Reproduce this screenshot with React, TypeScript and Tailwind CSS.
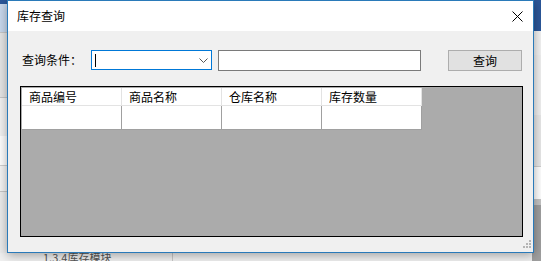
const columns = ['商品编号', '商品名称', '仓库名称', '库存数量'];

export default function App() {
  return (
    <div className="relative w-[541px] h-[261px] overflow-hidden bg-[#f0f0f0] font-['Noto_Sans_CJK_SC','Microsoft_YaHei',sans-serif] text-[12px] text-black">
      {/* Background window, left edge */}
      <div className="absolute left-0 top-0 w-[8px] h-[261px] flex flex-col">
        <div className="h-[4px] bg-[#2b579a]" />
        <div className="h-[28px] bg-[#c9d9ee]" />
        <div className="h-[66px] bg-[#e6e6e6] border-y border-[#c8c8c8]" />
        <div className="h-[38px] bg-[#f3f3f3]" />
        <div className="h-[30px] bg-white border-b border-[#d0d0d0]" />
        <div className="h-[26px] bg-[#f5f5f5] border-b border-[#c8c8c8]" />
        <div className="flex-1 bg-[#ececec]" />
      </div>

      {/* Background window, right edge */}
      <div className="absolute right-0 top-0 w-[9px] h-[261px] flex flex-col">
        <div className="h-[31px] bg-[#2b579a]" />
        <div className="h-[24px] bg-[#f3f3f3]" />
        <div className="h-[60px] bg-[#f0f0f0]" />
        <div className="h-[52px] bg-[#e8e8e8] border-b border-[#cfcfcf]" />
        <div className="h-[32px] bg-white" />
        <div className="h-[6px] bg-[#c4c4c4]" />
        <div className="flex-1 bg-[#9f9f9f]" />
      </div>

      {/* Background window, bottom strip */}
      <div className="absolute left-0 top-[253px] w-[532px] h-[8px] bg-[#f0f0f0] overflow-hidden">
        <div className="absolute left-[172px] top-0 w-px h-[8px] bg-[#c8c8c8]" />
        <span className="absolute left-[43px] top-[-1px] text-[11px] leading-[11px] text-[#555]">1.3.4库存模块</span>
      </div>

      {/* Dialog */}
      <div className="absolute left-[7px] top-0 w-[527px] h-[253px] flex flex-col border border-[#2a7ab9] bg-[#f0f0f0] shadow-[0_2px_10px_rgba(0,0,0,0.35)]">
        {/* Title bar */}
        <div className="h-[30px] bg-white flex items-center justify-between pl-[9px] pr-[10px]">
          <span className="leading-none">库存查询</span>
          <svg width="11" height="11" viewBox="0 0 11 11">
            <path d="M0.5 0.5 L10.5 10.5 M10.5 0.5 L0.5 10.5" stroke="#000" strokeWidth="1" fill="none" />
          </svg>
        </div>

        {/* Client area */}
        <div className="flex-1 flex flex-col pl-[12px]">
          <div className="flex items-center h-[22px] mt-[18px]">
            <span className="w-[71px] pl-[2px] leading-none">查询条件：</span>
            <div className="w-[121px] h-[20px] bg-white border border-[#0078d7] flex items-center justify-between pl-[3px] pr-[3px]">
              <span className="w-px h-[13px] bg-black" />
              <svg width="9" height="5" viewBox="0 0 9 5">
                <path d="M0.5 0.5 L4.5 4.5 L8.5 0.5" fill="none" stroke="#555" strokeWidth="1" />
              </svg>
            </div>
            <div className="ml-[6px] w-[203px] h-[21px] bg-white border border-[#7a7a7a]" />
            <button className="ml-[27px] w-[74px] h-[21px] mt-[1px] bg-[#e1e1e1] border border-[#adadad] flex items-center justify-center leading-none">
              查询
            </button>
          </div>

          {/* Data grid */}
          <div className="mt-[15px] w-[503px] h-[151px] border border-black bg-[#ababab] p-px">
            <div className="flex w-[400px] h-[18px] bg-white border-b border-[#e3e3e3]">
              {columns.map((c) => (
                <div key={c} className="w-[100px] border-r border-[#e3e3e3] pl-[7px] flex items-center leading-none">
                  {c}
                </div>
              ))}
            </div>
            <div className="flex w-[400px] h-[24px] bg-white border-b border-[#a0a0a0]">
              {columns.map((c) => (
                <div key={c} className="w-[100px] border-r border-[#a0a0a0]" />
              ))}
            </div>
          </div>
        </div>

        {/* Size grip */}
        <div className="absolute right-[2px] bottom-[2px] w-[10px] h-[10px]">
          <span className="absolute right-0 top-0 w-[2px] h-[2px] bg-[#b4b4b4]" />
          <span className="absolute right-0 top-[3px] w-[2px] h-[2px] bg-[#b4b4b4]" />
          <span className="absolute right-[3px] top-[3px] w-[2px] h-[2px] bg-[#b4b4b4]" />
          <span className="absolute right-0 top-[6px] w-[2px] h-[2px] bg-[#b4b4b4]" />
          <span className="absolute right-[3px] top-[6px] w-[2px] h-[2px] bg-[#b4b4b4]" />
          <span className="absolute right-[6px] top-[6px] w-[2px] h-[2px] bg-[#b4b4b4]" />
        </div>
      </div>
    </div>
  );
}
